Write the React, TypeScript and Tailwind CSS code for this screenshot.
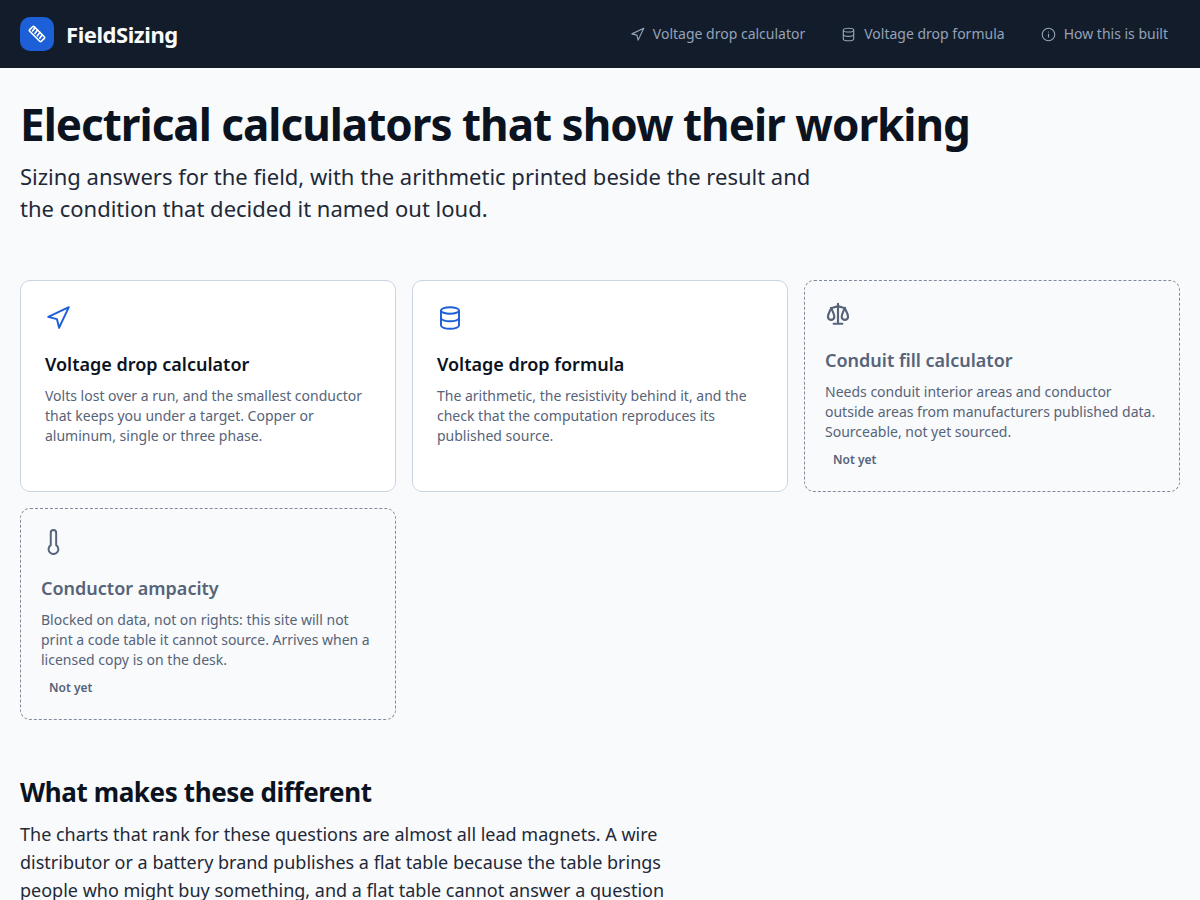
import React from 'react';

type IconProps = { className?: string };

function Svg({ className, children, weight = 1.8 }: { className?: string; children: React.ReactNode; weight?: number }) {
  return (
    <svg
      viewBox="0 0 24 24"
      fill="none"
      stroke="currentColor"
      strokeWidth={weight}
      strokeLinecap="round"
      strokeLinejoin="round"
      aria-hidden="true"
      className={className}
    >
      {children}
    </svg>
  );
}

function ArrowIcon({ className }: IconProps) {
  return (
    <Svg className={className}>
      <path d="M3 11 22 2l-9 19-2-8-8-2Z" />
    </Svg>
  );
}

function DatabaseIcon({ className }: IconProps) {
  return (
    <Svg className={className}>
      <ellipse cx="12" cy="5" rx="8.300" ry="3" />
      <path d="M3.700 5v14c0 1.660 3.700 3 8.300 3s8.300-1.340 8.300-3V5" />
      <path d="M3.700 12c0 1.660 3.700 3 8.300 3s8.300-1.340 8.300-3" />
    </Svg>
  );
}

function InfoIcon({ className }: IconProps) {
  return (
    <Svg className={className}>
      <circle cx="12" cy="12" r="10" />
      <path d="M12 16v-4.500M12 8h.01" />
    </Svg>
  );
}

function ScaleIcon({ className }: IconProps) {
  return (
    <Svg className={className} weight={2}>
      <path d="M12 2.700V21M8 21h8M5.500 6.500C8 6.300 9.800 5 12 5s4 1.300 6.500 1.500" />
      <path d="M5.800 6.500C4.500 9.500 2.700 12 2.700 14.500a2.900 2.900 0 0 0 5.900 0c0-2.500-1.700-5-2.800-8Z" />
      <path d="M18.200 6.500c1.300 3 3.100 5.500 3.100 8a2.900 2.900 0 0 1-5.900 0c0-2.500 1.700-5 2.800-8Z" />
    </Svg>
  );
}

function ThermometerIcon({ className }: IconProps) {
  return (
    <Svg className={className}>
      <path d="M14 3.400v11.500a4.500 4.500 0 1 1-5 0V3.400a2.500 2.500 0 0 1 5 0Z" />
    </Svg>
  );
}

function RulerIcon({ className }: IconProps) {
  return (
    <Svg className={className} weight={2.2}>
      <path d="M21.700 15.700a1.500 1.500 0 0 1 0 2.100l-3.900 3.900a1.500 1.500 0 0 1-2.100 0L2.300 8.300a1.500 1.500 0 0 1 0-2.100l3.900-3.900a1.500 1.500 0 0 1 2.100 0Z" />
      <path d="M9.500 3.500 6 8M12.700 6.700l-3.500 4.500M15.900 9.900l-3.500 4.500M19.100 13.100l-3.500 4.500" />
    </Svg>
  );
}

const nav = [
  { label: 'Voltage drop calculator', Icon: ArrowIcon },
  { label: 'Voltage drop formula', Icon: DatabaseIcon },
  { label: 'How this is built', Icon: InfoIcon },
];

const tools = [
  {
    title: 'Voltage drop calculator',
    Icon: ArrowIcon,
    text: 'Volts lost over a run, and the smallest conductor that keeps you under a target. Copper or aluminum, single or three phase.',
  },
  {
    title: 'Voltage drop formula',
    Icon: DatabaseIcon,
    text: 'The arithmetic, the resistivity behind it, and the check that the computation reproduces its published source.',
  },
];

const planned = [
  {
    title: 'Conduit fill calculator',
    Icon: ScaleIcon,
    text: 'Needs conduit interior areas and conductor outside areas from manufacturers published data. Sourceable, not yet sourced.',
  },
  {
    title: 'Conductor ampacity',
    Icon: ThermometerIcon,
    text: 'Blocked on data, not on rights: this site will not print a code table it cannot source. Arrives when a licensed copy is on the desk.',
  },
];

export default function App() {
  return (
    <div className="min-h-screen bg-[#f8fafc] font-['Noto_Sans',sans-serif] text-[#1f2937]">
      <header className="flex h-17 items-center justify-between bg-[#131c2b] px-5">
        <a href="#home" className="flex items-center gap-3 text-[22px] font-bold tracking-[-0.02em] text-[#f8fafc]">
          <span className="flex size-[34px] items-center justify-center rounded-[10px] bg-[#1d5fd6] text-white">
            <RulerIcon className="size-[18px]" />
          </span>
          FieldSizing
        </a>
        <nav className="flex gap-3">
          {nav.map(({ label, Icon }) => (
            <a key={label} href="#tool" className="flex items-center gap-2 px-3 py-2 text-sm text-[#94a3b8]">
              <Icon className="size-[15px]" />
              {label}
            </a>
          ))}
        </nav>
      </header>

      <main className="px-5 pt-8">
        <h1 className="text-[44px] leading-[48px] font-bold tracking-[-1px] text-[#0b1220]">
          Electrical calculators that show their working
        </h1>
        <p className="mt-3 max-w-[820px] text-[22px] leading-8">
          Sizing answers for the field, with the arithmetic printed beside the result and the condition that decided it named out loud.
        </p>

        <div className="mt-14 grid auto-rows-fr grid-cols-[repeat(auto-fill,minmax(320px,1fr))] gap-4">
          {tools.map(({ title, Icon, text }) => (
            <a key={title} href="#tool" className="block rounded-[10px] border border-[#cbd5e1] bg-white p-6">
              <Icon className="size-[26px] text-[#1d5fd6]" />
              <h2 className="mt-5 text-lg leading-[26px] font-semibold text-[#0b1220]">{title}</h2>
              <p className="mt-[9px] text-sm leading-5 text-[#566378]">{text}</p>
            </a>
          ))}
          {planned.map(({ title, Icon, text }) => (
            <div key={title} className="rounded-[10px] border border-dashed border-[#7f8a9c] p-5 text-[#566378]">
              <Icon className="size-[26px]" />
              <h2 className="mt-5 text-lg leading-[26px] font-semibold">{title}</h2>
              <p className="mt-[9px] text-sm leading-5">{text}</p>
              <div className="pt-2 pb-px">
                <span className="block px-2 text-xs leading-5 font-semibold">Not yet</span>
              </div>
            </div>
          ))}
        </div>

        <section className="mt-14 max-w-[660px]">
          <h2 className="text-[26px] leading-8 font-bold tracking-[-0.015em] text-[#0b1220]">What makes these different</h2>
          <p className="mt-3 text-lg leading-7">
            The charts that rank for these questions are almost all lead magnets. A wire distributor or a battery brand publishes a flat table because the table brings people who might buy something, and a flat table cannot answer a question
          </p>
        </section>
      </main>
    </div>
  );
}
